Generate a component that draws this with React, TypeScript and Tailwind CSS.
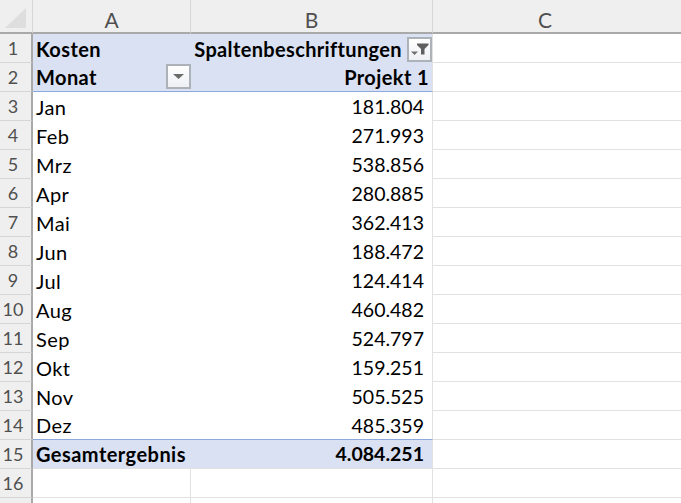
const months: [string, string][] = [
  ["Jan", "181.804"],
  ["Feb", "271.993"],
  ["Mrz", "538.856"],
  ["Apr", "280.885"],
  ["Mai", "362.413"],
  ["Jun", "188.472"],
  ["Jul", "124.414"],
  ["Aug", "460.482"],
  ["Sep", "524.797"],
  ["Okt", "159.251"],
  ["Nov", "505.525"],
  ["Dez", "485.359"],
];

function RowHead({ n }: { n: number }) {
  return (
    <div className="flex h-[29px] items-center justify-center border-r-2 border-b border-r-[#a9a9a9] border-b-[#d6d6d6] bg-[#efefef] pt-[1px] pr-[5px] text-[18px] text-[#505050]">
      {n}
    </div>
  );
}

function Gap() {
  return <div className="h-[29px] border-b border-[#e1e1e1]" />;
}

function FilterButton({ children, className }: { children: React.ReactNode; className: string }) {
  return (
    <div className={`flex h-[25px] w-[25px] shrink-0 items-center justify-center border-2 border-[#adb1b8] bg-gradient-to-b from-white to-[#eef0f4] tracking-normal ${className}`}>
      {children}
    </div>
  );
}

const colHead =
  "flex h-[34px] items-center justify-center border-b-2 border-b-[#a9a9a9] bg-[#efefef] pt-[7px] text-[21px] text-[#505050]";

export default function App() {
  return (
    <div
      className="h-[503px] w-[681px] overflow-hidden bg-white text-[19.5px] text-black"
      style={{ fontFamily: '"Lato", "Noto Sans", sans-serif' }}
    >
      <div className="grid grid-cols-[33px_158px_242px_248px]">
        {/* column headers */}
        <div className="flex h-[34px] items-end justify-center border-r border-b-2 border-r-[#d6d6d6] border-b-[#a9a9a9] bg-[#efefef] pb-[4px]">
          <svg width="21" height="20" viewBox="0 0 21 20" className="mr-[1px]">
            <path d="M21 0V20H0Z" fill="#dedede" />
          </svg>
        </div>
        <div className={`${colHead} border-r border-r-[#d6d6d6]`}>A</div>
        <div className={`${colHead} border-r border-r-[#d6d6d6]`}>B</div>
        <div className={`${colHead} pr-[24px]`}>C</div>

        {/* row 1 */}
        <RowHead n={1} />
        <div className="flex h-[29px] items-center bg-[#d9e1f2] pl-[3px] text-[20px] font-bold tracking-[0.4px]">
          Kosten
        </div>
        <div className="flex h-[29px] items-center justify-end gap-[5px] border-r border-[#e1e1e1] bg-[#d9e1f2] text-[20px] font-bold tracking-[0.35px]">
          <span>Spaltenbeschriftungen</span>
          <FilterButton className="mt-[1px]">
            <svg width="18" height="12" viewBox="0 0 18 12">
              <path d="M6 0.5H17.5V2L13.5 6V11.5L10 11.5V6L6 2Z" fill="#5f5f5f" />
              <path d="M0 8.5H7L3.5 12Z" fill="#6f6f6f" />
            </svg>
          </FilterButton>
        </div>
        <Gap />

        {/* row 2 */}
        <RowHead n={2} />
        <div className="flex h-[29px] items-center justify-between border-b border-[#8ea9db] bg-[#d9e1f2] pr-[0px] pl-[3px] text-[20px] font-bold tracking-[0.4px]">
          <span>Monat</span>
          <FilterButton className="mt-[-2px]">
            <svg width="11" height="5" viewBox="0 0 11 5">
              <path d="M0 0H11L5.5 5Z" fill="#6b6b6b" />
            </svg>
          </FilterButton>
        </div>
        <div className="flex h-[29px] items-center justify-end border-r border-b border-r-[#e1e1e1] border-b-[#8ea9db] bg-[#d9e1f2] pr-[3px] text-[20px] font-bold tracking-[0.4px]">
          Projekt 1
        </div>
        <Gap />

        {/* data rows */}
        {months.map(([m, v], i) => (
          <div key={m} className="contents">
            <RowHead n={i + 3} />
            <div
              className={`flex h-[29px] items-center pl-[3px] text-[20px] tracking-[0.4px] ${i === 11 ? "border-b border-[#8ea9db]" : ""}`}
            >
              {m}
            </div>
            <div
              className={`flex h-[29px] items-center justify-end border-r border-r-[#e1e1e1] pt-[1px] pr-[8px] ${i === 11 ? "border-b border-b-[#8ea9db]" : ""}`}
            >
              {v}
            </div>
            <Gap />
          </div>
        ))}

        {/* total */}
        <RowHead n={15} />
        <div className="flex h-[29px] items-center border-b border-[#e1e1e1] bg-[#d9e1f2] pl-[3px] text-[20px] font-bold tracking-[0.45px]">
          Gesamtergebnis
        </div>
        <div className="flex h-[29px] items-center justify-end border-r border-b border-[#e1e1e1] bg-[#d9e1f2] pr-[8px] text-[19.5px] font-bold">
          4.084.251
        </div>
        <Gap />

        {/* row 16 */}
        <RowHead n={16} />
        <div className="h-[29px] border-r border-b border-[#e1e1e1]" />
        <div className="h-[29px] border-r border-b border-[#e1e1e1]" />
        <Gap />

        {/* row 17 */}
        <div className="h-[6px] border-r-2 border-r-[#a9a9a9] bg-[#efefef]" />
        <div className="h-[6px] border-r border-[#e1e1e1]" />
        <div className="h-[6px] border-r border-[#e1e1e1]" />
        <div className="h-[6px]" />
      </div>
    </div>
  );
}
